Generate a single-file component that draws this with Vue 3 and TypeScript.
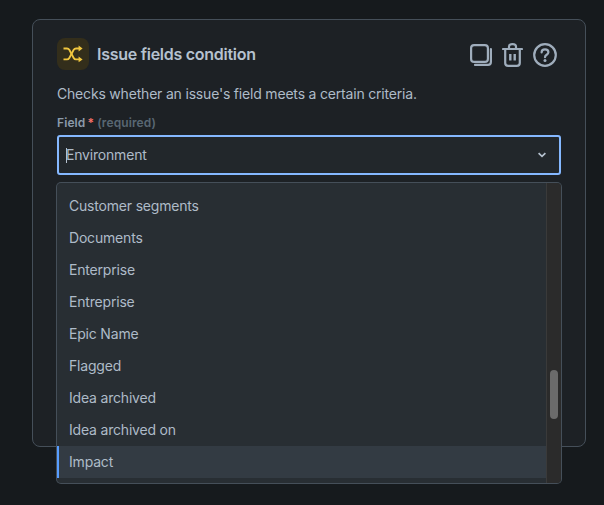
<template>
  <div class="page">
    <section class="card">
      <header class="card-head">
        <span class="badge">
          <svg viewBox="0 0 20 18" width="20" height="18" fill="none" stroke="#f0c63f" stroke-width="1.8">
            <path d="M0.5 3.5H4C5 3.5 5.8 4 6.3 4.8L10.7 13C11.2 13.9 12 14.4 13 14.4H16.5" />
            <path d="M0.5 14.4H4C5 14.4 5.8 13.9 6.3 13L10.7 4.8C11.2 4 12 3.5 13 3.5H16.5" />
            <path d="M15.6 0.6L19.6 3.5L15.6 6.4Z M15.6 11.5L19.6 14.4L15.6 17.3Z" fill="#f0c63f" stroke="none" />
          </svg>
        </span>
        <h2 class="title">Issue fields condition</h2>
        <div class="actions">
          <svg viewBox="0 0 22 22" width="22" height="22" fill="none" stroke="#9fadbc" stroke-width="2.2">
            <rect x="1.1" y="1.1" width="16.8" height="16.8" rx="3" />
            <path d="M20.9 5V18C20.9 19.8 19.8 20.9 18 20.9H5" stroke-linecap="round" />
          </svg>
          <svg viewBox="0 0 21 24" width="21" height="24" fill="none" stroke="#9fadbc" stroke-width="2.2">
            <path d="M1 6H20M7 5.5V3.5C7 2 8.3 1.1 10.5 1.1S14 2 14 3.5V5.5" stroke-linecap="round" />
            <path d="M3.2 6V20C3.2 21.8 4.4 22.9 6.2 22.9H14.8C16.6 22.9 17.8 21.8 17.8 20V6" />
            <path d="M8.3 11V17.5M12.7 11V17.5" stroke-width="2.4" />
          </svg>
          <svg viewBox="0 0 24 24" width="24" height="24" fill="none" stroke="#9fadbc" stroke-width="2.2">
            <circle cx="12" cy="12" r="10.8" />
            <path d="M8.6 9.4C8.6 7.5 10.1 6.4 12 6.4S15.4 7.6 15.4 9.3C15.4 11.8 12 11.7 12 14.2" stroke-linecap="round" />
            <circle cx="12" cy="17.6" r="1.5" fill="#9fadbc" stroke="none" />
          </svg>
        </div>
      </header>

      <p class="desc">Checks whether an issue's field meets a certain criteria.</p>

      <div class="field">
        <label class="label">Field<span class="star">*</span> <span class="req">(required)</span></label>
        <div class="select">
          <span class="caret"></span>
          <span class="value">Environment</span>
          <svg class="chevron" viewBox="0 0 10 8" width="10" height="8" fill="none" stroke="#b6c2cf" stroke-width="1.7">
            <path d="M1.6 2.2L5 5.4L8.4 2.2" />
          </svg>
        </div>

        <div class="menu">
          <ul class="options">
            <li v-for="opt in options" :key="opt" class="option" :class="{ active: opt === active }">{{ opt }}</li>
          </ul>
          <div class="scrollbar"><span class="thumb"></span></div>
        </div>
      </div>
    </section>
  </div>
</template>

<script setup lang="ts">
const active = 'Impact'

const options: string[] = [
  'Customer segments',
  'Documents',
  'Enterprise',
  'Entreprise',
  'Epic Name',
  'Flagged',
  'Idea archived',
  'Idea archived on',
  'Impact',
]
</script>

<style>
html,
body {
  background: #161a1d;
}
</style>

<style scoped>
.page {
  height: 505px;
  padding: 19px 18px 0 32px;
  box-sizing: border-box;
  font-family: Inter, "Liberation Sans", sans-serif;
  overflow: hidden;
}

.card {
  height: 428px;
  box-sizing: border-box;
  padding: 18px 24px 0 24px;
  background: #1d2125;
  border: 1px solid #454f59;
  border-radius: 8px;
}

.card-head {
  display: flex;
  align-items: center;
  height: 32px;
}

.badge {
  display: flex;
  align-items: center;
  justify-content: center;
  width: 32px;
  height: 32px;
  border-radius: 8px;
  background: #332e1b;
}

.title {
  margin: 0 0 0 8px;
  font-size: 16px;
  font-weight: 600;
  letter-spacing: -0.27px;
  color: #b6c2cf;
}

.actions {
  display: flex;
  align-items: center;
  gap: 10px;
  margin-left: auto;
  margin-right: 4px;
  margin-top: 1px;
}

.desc {
  margin: 14px 0 0;
  font-size: 14px;
  line-height: 20px;
  letter-spacing: -0.19px;
  color: #aebbc8;
}

.field {
  position: relative;
  margin-top: 9px;
}

.label {
  display: block;
  height: 20px;
  font-size: 12px;
  font-weight: 600;
  line-height: 20px;
  letter-spacing: 0.1px;
  color: #8c9bab;
}

.star {
  margin-left: 2px;
  color: #f87168;
}

.req {
  color: #596773;
}

.select {
  display: flex;
  align-items: center;
  height: 40px;
  box-sizing: border-box;
  margin-top: 2px;
  padding-left: 7px;
  padding-right: 12px;
  background: #22272b;
  border: 2px solid #85b8ff;
  border-radius: 3px;
}

.caret {
  width: 1px;
  height: 15px;
  margin-right: -1px;
  background: #b6c2cf;
}

.value {
  font-size: 14px;
  line-height: 18px;
  margin-top: -1px;
  letter-spacing: -0.19px;
  color: #aebbc8;
}

.chevron {
  margin-left: auto;
}

.menu {
  position: absolute;
  top: 70px;
  left: 0;
  right: 0;
  height: 300px;
  display: flex;
  overflow: hidden;
  background: #282e33;
  border-radius: 4px;
  box-shadow: 0 0 0 1px #454f59;
}

.options {
  flex: 1;
  margin: 0;
  padding: 7px 0 0;
  list-style: none;
}

.option {
  height: 32px;
  padding-left: 12px;
  font-size: 14px;
  line-height: 32px;
  letter-spacing: -0.19px;
  color: #aebbc8;
}

.option.active {
  background: #333b43;
  box-shadow: inset 2px 0 0 #579dff;
}

.scrollbar {
  position: relative;
  flex: none;
  width: 15px;
  background: #2b2b2b;
  border-left: 1px solid #3a3a3a;
  box-sizing: border-box;
}

.thumb {
  position: absolute;
  top: 187px;
  left: 3px;
  width: 8px;
  height: 49px;
  border-radius: 4px;
  background: #6b6b6b;
}
</style>
